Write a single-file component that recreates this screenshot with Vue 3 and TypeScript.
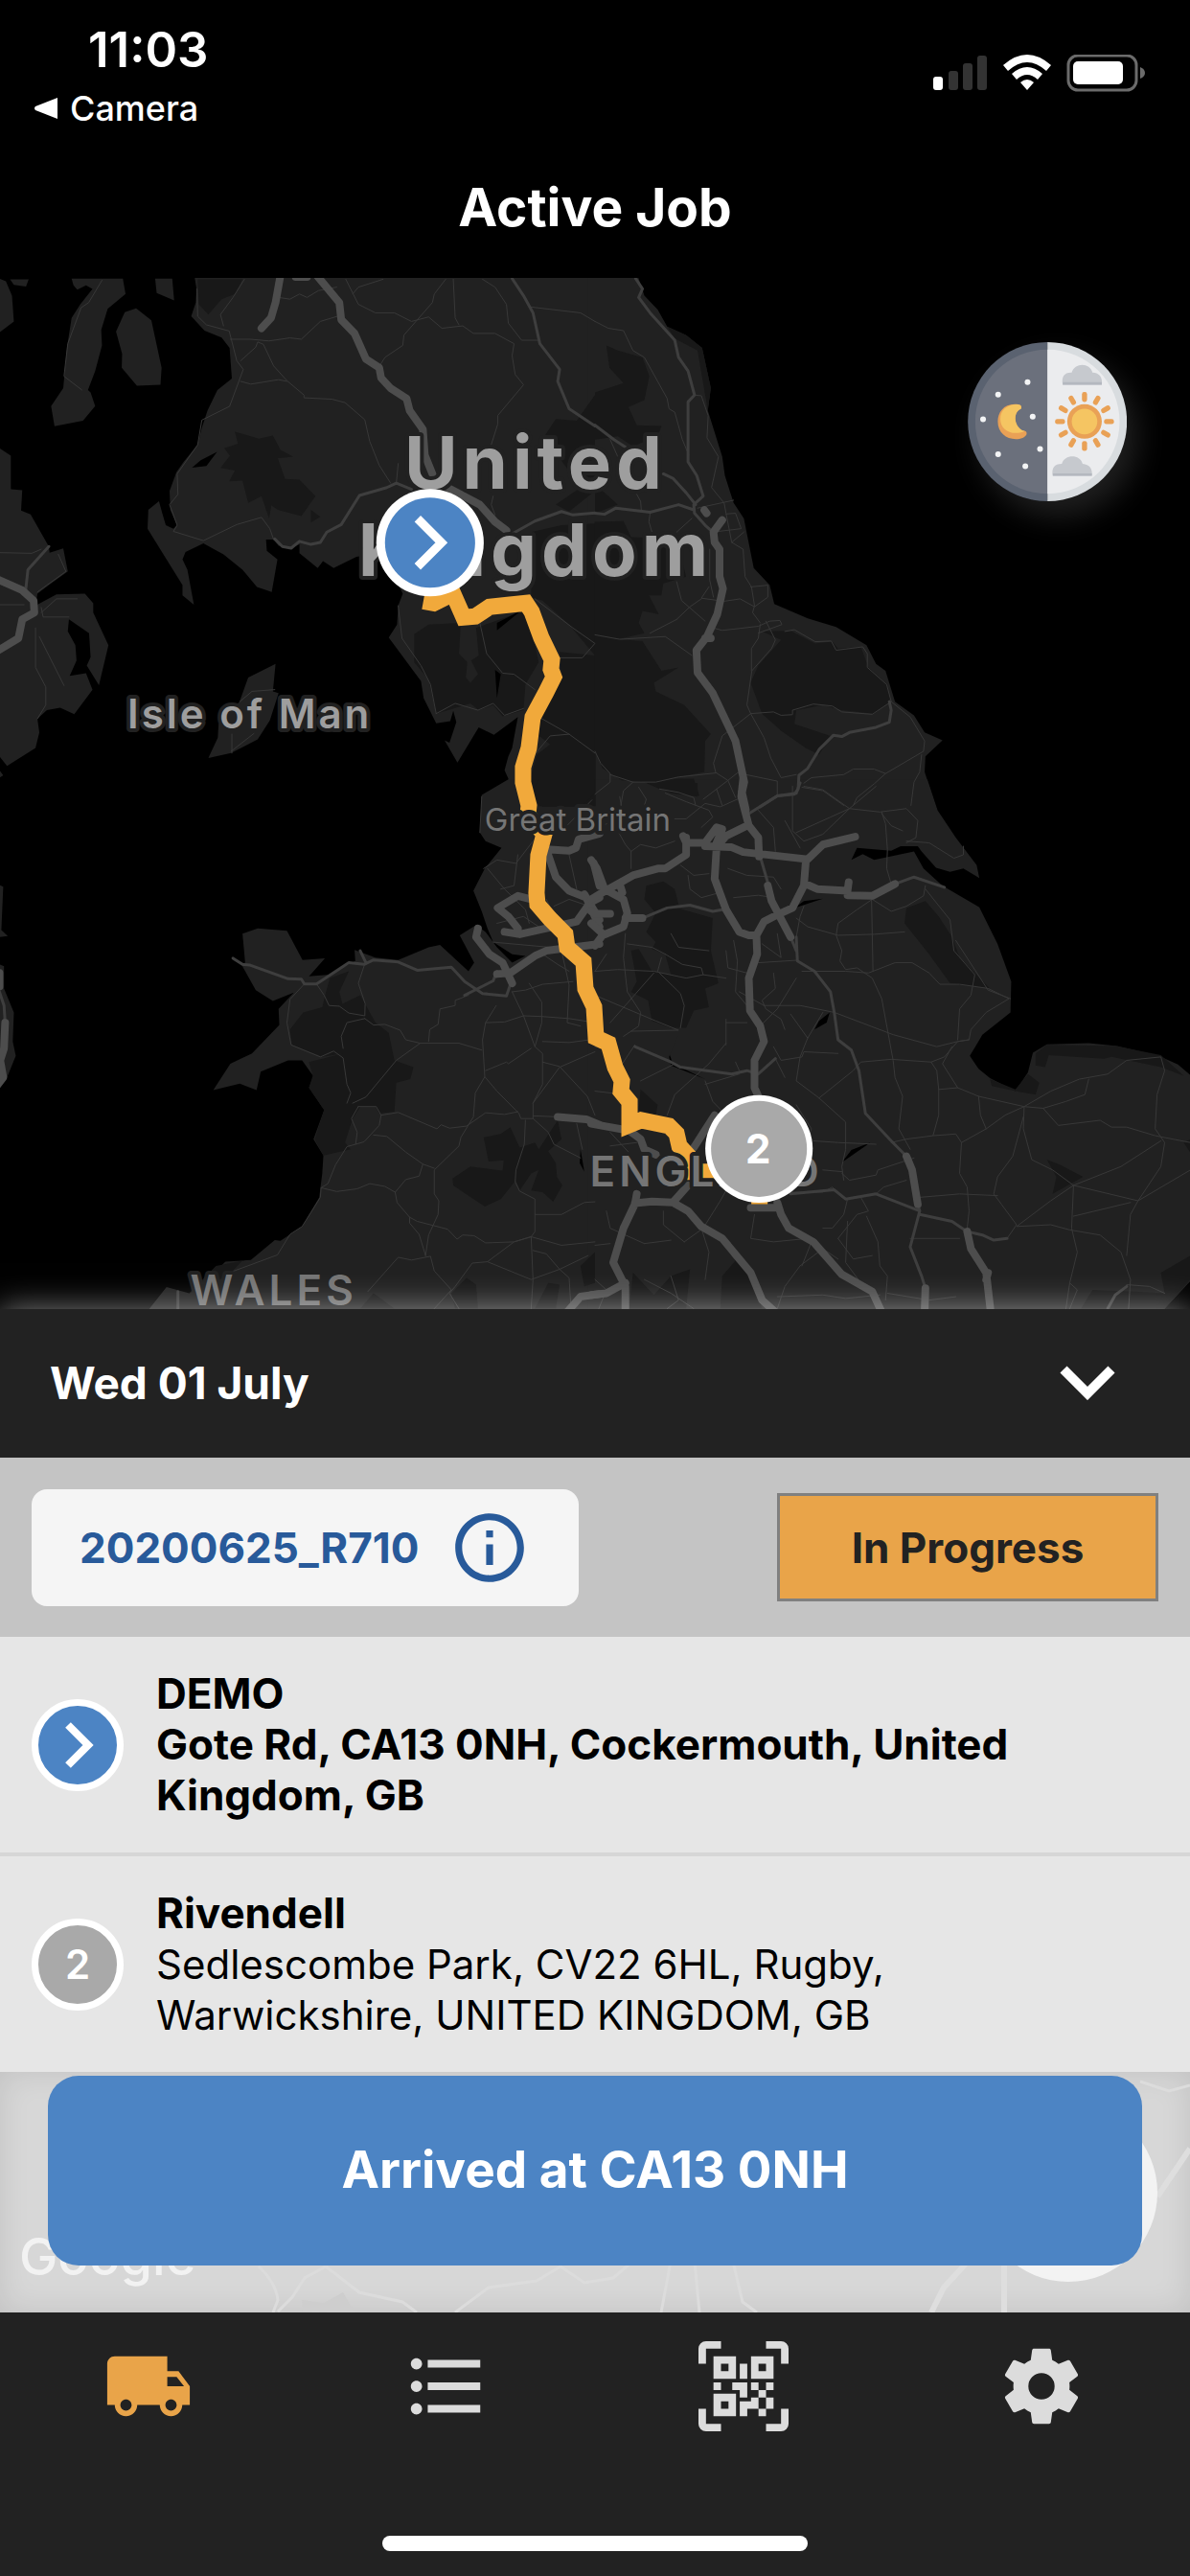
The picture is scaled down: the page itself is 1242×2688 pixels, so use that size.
<script setup lang="ts">
import { ref } from 'vue'

type Layer = 'land' | 'park' | 'water' | 'minor' | 'major' | 'motorway'

interface Tile extends Record<Layer, string> {
  id: string
  x: number
  y: number
}

interface MapLabel {
  text: string
  x: number
  y: number
  kind: string
}

interface Stop {
  name: string
  address: string
  current: boolean
  order: number
}

interface Tab {
  id: string
  label: string
  icon: string
}

// Painted bottom to top across all tiles, so that tile edges never show.
const layers: Layer[] = ['land', 'park', 'water', 'minor', 'major', 'motorway']

// Each tile covers 621 x 560 map pixels and is drawn on a 1568-unit grid.
const tiles: Tile[] = [
  {
    id: 'north-west',
    x: 0,
    y: 280,
    land:
      'M513 20L519 60 517 100 505 140 540 182 585 202 606 232 612 322 574 355 548 415 533 465 522 515 485 565 466 595 448 650 450 705 468 750 458 760 438 750 430 720 420 680 392 705 390 760 440 850 482 925 482 955 512 982 495 880 482 850 490 828 537 803 590 835 640 880 678 930 717 945 732 850 704 825 702 792 722 792 735 810 767 817 790 806 790 832 838 875 852 855 880 875 940 842 1010 830 1062 950 1050 985 1047 1040 1025 1078 1110 1205 1117 1255 1150 1328 1187 1322 1195 1292 1203 1325 1185 1385 1172 1378 1206 1443 1262 1340 1302 1362 1365 1310 1350 1400 1340 1425 1330 1465 1340 1490 1342 1515 1270 1540 1270 1580H1600V20Z' +
      'M0 30L17 38 33 80 38 155 0 187ZM28 32H77L70 53 38 48ZM190 30H325L332 75 285 118 268 180 270 225 252 300 233 355 240 362 252 402 220 445 145 461 136 402 168 350 178 230 190 145 213 105 245 60 228 50 205 62 195 50ZM330 128L360 117 400 152 427 290 424 340 362 343 322 290 323 250 307 185ZM410 30H455L460 94 414 72Z' +
      'M0 525L30 547V645L60 648 57 707 82 718 130 812 132 830 168 818 180 885 130 925 100 950 95 985 150 952 225 950 247 978V1005L287 1100 262 1217 230 1160 240 1135 236 1065 183 1025 180 1060 200 1100 203 1145 185 1190 228 1182 245 1230 197 1302 160 1283 125 1290 100 1315 105 1355 95 1400 20 1453 0 1425ZM0 1465L10 1480 0 1487ZM727 1155L720 1235 735 1240 712 1320 680 1375 610 1415 550 1430 575 1370 577 1330 632 1265 655 1195Z',
    park:
      'M620 477L683 497 720 488 740 530 773 550 733 555 752 615 790 617 832 665 795 723 733 705 716 692 710 730 690 665 655 685 640 620 605 622 620 590 582 583 607 547 592 525 628 512ZM820 705L845 725 820 742ZM522 32H640L620 75 585 90 550 135 525 105ZM1092 1068L1130 1040 1215 1035 1210 1125 1232 1150 1228 1195 1240 1210 1260 1185 1242 1145 1262 1130 1255 1050 1380 1000 1410 1100 1420 1150 1385 1215 1380 1290 1325 1308 1300 1275 1262 1290 1240 1270 1150 1300 1130 1200 1092 1150Z' +
      'M1400 770L1480 750 1570 745V1380L1510 1398 1450 1390 1415 1360 1410 1300 1480 1200 1475 1120 1568 1130 1500 1040 1430 970 1400 960ZM1465 440L1520 445 1568 370V650L1500 710 1465 690 1530 640 1460 530 1435 490ZM1415 1420L1450 1390 1510 1398 1570 1370V1570H1420L1395 1500Z',
    water: 'M507 582L530 560 573 536 545 577ZM1310 1035L1375 998 1310 1057ZM1305 1172L1320 1185 1310 1255Z',
    minor:
      'M270 35L235 100 215 115 180 220 170 315 217 355M520 60L522 140 545 165 605 183 625 270 642 295 606 403 533 443 522 515 468 600 470 660 448 690 468 750 458 768 537 795 625 748 690 727 712 760 722 792M735 85L765 90 790 75 810 85 840 65 888 55M645 32L615 85 582 135 590 168M608 207H660L710 212 765 203 795 207 845 155 890 140M635 270L675 230 680 215 695 222 722 285 757 328 802 370V378L875 382 910 392 962 442 975 505 1000 575 1030 627M635 330L662 338 735 325 757 330M912 32L945 105 990 130 1040 130 1085 155 1130 142 1165 175 1220 168 1248 190 1305 190 1355 220 1350 255 1358 310 1380 340 1312 430V455L1295 515M1175 32L1145 75 1140 100 1065 195 1062 225 1015 260 998 290M1195 32L1200 145 1210 165M1272 32L1305 55 1335 105 1340 160 1375 210H1423M1400 113L1530 130 1568 155M930 75L945 55 1010 32' +
      'M0 830L85 832 110 820M155 835L175 885 100 945M0 982H65M110 1005L150 965 205 965M110 990L115 1018H183M105 1075L170 1218M95 1050V1165L122 1222V1275L100 1315M1050 985L1060 1080 1110 1160 1135 1215 1150 1300M1265 1035L1283 1125 1325 1182 1355 1185 1410 1230M1410 965L1510 1050 1568 1095 1535 1137H1475M1150 1300L1200 1270 1260 1290 1300 1270 1330 1305 1380 1285M1405 1300L1500 1360 1568 1415M1300 665L1295 690 1305 720M633 1265L665 1235 725 1230M612 1415V1360M610 1410L670 1358M1405 1425L1450 1365 1500 1360M1050 570L1045 627',
    major:
      'M1350 30L1380 80 1405 130 1423 220 1475 295 1470 330 1500 410 1568 460M725 790L745 812 768 817 790 797 820 806 845 800 862 770 900 748 948 663 1020 640 1045 627 1085 645M1350 775L1410 738 1480 710 1510 720 1568 714M130 812L75 880 68 950',
    motorway:
      'M740 20L727 100 715 145 690 175M835 20L895 100 900 150 935 190 965 265 1000 290 1005 320 1030 350 1072 380 1080 415 1115 470 1120 545 1140 600M1180 640L1265 690 1305 740 1335 765M-10 905L60 940 90 970 92 1005 60 1025 50 1080 -10 1120M780 25H810',
  },
  {
    id: 'north-east',
    x: 621,
    y: 280,
    land:
      'M-20 20H112L130 80 165 120 190 170 240 195 282 232 305 350 297 415 335 550 342 605 365 685 392 730 418 875 460 925 472 980 560 1022 635 1047 715 1100 740 1155 765 1175 790 1265 840 1305 868 1355 915 1378 870 1425 868 1470 900 1580H-20Z',
    park:
      'M30 225L60 240 125 260 143 315 130 385 88 405 110 458 175 460 165 490 100 520 60 490 0 500V362L75 335 38 290ZM0 630L60 690 0 715ZM-1 740L75 738 95 785 215 790 240 900 180 920 175 955 142 955 168 1010 125 1000 115 1035 130 1065 60 1083 125 1088 175 1175 220 1165 155 1210 160 1235 235 1275 305 1360 290 1380 288 1470 200 1490 260 1490 275 1540 170 1520 130 1500 70 1495 20 1460 -1 1410ZM440 1060L515 1058 580 1095 625 1090 640 1110 700 1105 720 1165 770 1215 780 1265 735 1300 650 1290 600 1275 530 1290 525 1330 620 1365 590 1420 555 1400 490 1350 440 1300 410 1210 430 1160 490 1085ZM190 170L240 195 282 232 305 350 297 415 270 240 210 205Z',
    water: '',
    minor:
      'M0 155L35 175 75 182 100 240 130 260 190 380 195 410 210 420 230 500 247 545M262 370L280 372 298 430 295 495 325 550 307 640 340 685 345 715 360 800 390 820 395 900 412 930 420 985 415 1005 435 1035M270 700L365 677M345 717L370 715 385 760 325 768M360 800L392 770M410 930L455 925 455 960 420 988 382 965 340 972 280 963 300 930M302 820V910L312 960M215 915L228 970 290 1030M215 1025L250 988 280 965M145 1065L215 1025M0 1070L65 1083 185 1075 255 1130M312 1050L335 1057 430 1045 460 1030 487 1028 492 1040 430 1065M450 1030L475 1085 465 1110 413 1175 400 1275 410 1300 470 1295 490 1305 520 1303V1290L575 1272 625 1278 650 1295 730 1302 780 1265M435 1040L430 1080 412 1110V1175M500 1060L525 1055 580 1090 622 1088 635 1115 705 1105 717 1125V1165L768 1215 780 1265 830 1310 868 1380 865 1410 765 1475 735 1462H680L655 1478 570 1487 550 1503M410 1300L445 1370 463 1430 490 1487 530 1478M410 1300L335 1365 312 1445 318 1472 350 1495 375 1473 480 1497V1540M765 1475L735 1505 690 1545 680 1568M545 1515L600 1525 655 1568M350 1495L370 1545M350 1495L285 1550M320 1520L335 1568M0 1410L15 1445 40 1475V1500L0 1535M40 1478L100 1500 160 1500 220 1485 320 1473M100 1500L75 1525 68 1568M115 1515L135 1550 130 1568M170 1520L220 1530 260 1545 265 1568M110 660L120 680 122 705M145 715L142 740 150 770M40 500L60 550M860 1420L855 1470 840 1500 832 1568M215 770L255 730',
    major:
      'M107 30L125 60 115 85 145 130 210 210 220 260 245 300 262 370 245 390V565L268 605 285 665 260 690 262 715 290 750 305 765M180 600L205 613 240 655 265 690M0 715L25 718 55 700 145 712 220 690 260 705M0 458L50 500 80 522M775 1265L780 1290 775 1325 740 1340 670 1355 650 1367 628 1363 590 1405 560 1460 537 1480 535 1520 525 1535 480 1540 435 1572',
    motorway:
      'M335 735L312 770 315 800 328 820V900L337 935 322 1010 295 1075 267 1115 270 1180 310 1240 370 1380 393 1500 387 1530 397 1580M288 706L294 715M290 1080H305',
  },
  {
    id: 'south-west',
    x: 0,
    y: 820,
    land:
      'M1340 -20L1270 25 1265 135 1280 160 1322 180 1278 240 1248 305 1270 365 1285 415 1300 455 1350 490 1385 495 1350 515 1310 470 1280 425 1255 405 1212 435 1250 515 1235 540 1160 463 1130 470 1050 507 990 500 935 478 937 510 870 550 815 555 857 502 798 507 757 422 680 415 640 430 647 515 637 520 675 595 720 627 775 602 735 650 737 697 665 780 608 810 563 887 633 868 677 887 688 833 760 800H797L827 847 815 880 855 945 827 1030 853 1078 850 1130 842 1200 797 1285 740 1327 725 1325 662 1383 595 1388 570 1415 500 1480 440 1462 395 1525V1580H1600V-20ZM0 288L10 293 5 420 22 437 0 440ZM0 520L12 525V590L38 660 35 745 43 787 20 850 0 875Z',
    park:
      'M870 560L920 540 895 600 903 635 950 610 990 690 1025 720 1040 800 1090 820 1082 855 1045 865 1040 950 1000 955 990 935H950L930 970 910 1040 925 1060 853 1078 830 1030 855 945 815 880 825 845 815 805 905 780 850 790 770 755 765 710 800 660 850 645 860 600ZM1275 1025L1320 1015 1345 995 1370 1055 1410 1040 1420 1060 1470 975 1480 1030 1445 1065 1465 1100 1468 1140 1482 1165 1458 1213 1430 1185 1400 1180 1420 1120 1400 1130 1370 1180 1360 1150 1320 1205 1278 1227 1195 1165 1193 1145 1240 1110 1325 1122 1328 1092 1288 1095ZM1190 1480L1230 1435 1255 1455 1260 1525H1200ZM950 1525L985 1480 1040 1525ZM1410 1525L1445 1450 1475 1455 1465 1525ZM1530 1400L1568 1360V1450L1540 1460ZM1400 20L1420 -20H1568V20L1530 60H1430ZM500 1480L570 1400 640 1385 600 1430Z',
    water: 'M1530 1060L1540 1125 1528 1100Z',
    minor:
      'M803 577L765 622 757 690 768 755 845 790 880 773 905 793 915 870 925 895 915 925M835 577L855 610 868 640 895 642 920 662 962 670 963 635 945 575 963 515M962 678L915 690 900 730 905 765M962 678L985 697 1015 695 1055 712 1070 740 1108 750H1210L1270 770M1108 750L1045 800 965 907 930 925M945 935H992L1005 960 1000 990 960 1038 938 1045 942 1010 927 970 945 935M1005 960L1050 952 1152 1000 1163 988 1185 998 1230 992 1280 953 1330 958 1365 950M985 1018L1020 1022 1070 1068 1115 1103 1105 1138 1070 1148 1042 1185 1015 1168 975 1160 942 1175 888 1183 847 1172M938 1045L915 1052 885 1105 865 1160 847 1172 845 1200 797 1285 765 1308 732 1368 610 1418M1042 1185L1047 1215 1080 1258V1275L1105 1308 1122 1370M1080 1258L1100 1270 1180 1293 1205 1322 1220 1310 1250 1312 1280 1333 1355 1330 1400 1315 1480 1340 1568 1330M1122 1370L1130 1310 1155 1250 1157 1210 1145 1190 1145 1120 1210 1050 1215 1025 1248 965 1253 895 1278 848 1272 740 1280 690 1308 640M1115 1103L1145 1115M1300 455L1450 470M1130 745L1133 710 1155 695 1160 650 1200 640V625L1235 610M1278 848L1310 890 1368 955 1373 970H1405V925L1430 870V780L1410 760 1380 670 1350 600M1410 760L1428 690V630L1395 575M1280 830L1335 805 1340 810 1400 765M1430 745L1500 748 1568 738M1405 925L1475 820 1568 775M1430 805L1475 818 1548 905 1568 960M1405 970L1445 1010 1460 1045 1530 1085M1385 975L1382 1045 1360 1120 1358 1155 1370 1182 1410 1205V1300L1400 1315 1405 1440 1400 1525M1410 1250H1480L1540 1215 1568 1213M1405 1355L1440 1365 1475 1410 1500 1435 1505 1525M1400 1315L1355 1330 1285 1388 1245 1392 1200 1460 1185 1480 1210 1525M1285 1388L1400 1440 1475 1410 1550 1370M970 1475L1050 1375 1085 1383 1135 1372 1145 1415 1190 1470 1145 1525M1405 962L1470 965M1280 690L1330 688 1380 670 1428 672 1500 678 1568 690M1350 600L1385 595 1430 578 1510 570M1275 240L1310 215 1360 225 1405 160M1365 200L1355 290 1320 300M1285 240L1330 300 1385 360 1395 400M1270 30L1265 135M1500 200L1520 300M1440 330L1480 420M1310 400L1380 380 1420 410M1460 350L1500 330 1540 345M1430 490L1470 520 1500 540M1480 480L1500 580 1495 690 1530 700M1450 130L1490 120 1560 40M1520 985L1535 1060',
    major:
      'M615 502L640 520 660 522 760 562 795 563 803 577H835L920 515 960 520 985 507 1050 513 1100 537 1190 528 1225 570 1272 605 1335 612 1348 570M1225 610L1300 568 1310 540M950 480L965 515M0 600L12 640 15 690M470 1475V1525',
    motorway:
      'M1260 415L1255 440 1290 490 1325 515 1350 575M1310 548L1345 545 1410 495 1440 480 1580 460M1330 425L1370 432 1520 395 1555 340 1580 325M1365 415L1340 380 1312 355 1365 320 1400 330M1450 185L1500 188 1518 180 1525 155 1580 138M1445 200L1465 265 1500 305 1545 325 1580 410M1540 315L1580 390M1565 225L1580 290M1470 965L1545 972 1580 988M1475 1560L1530 1490 1580 1482M0 545V585M15 690L12 765 2 800 10 850 -5 872',
  },
  {
    id: 'south-east',
    x: 621,
    y: 820,
    land:
      'M-20 -20H875L902 70 950 150 1005 230 1012 268 970 240 935 250 898 238 860 190 850 175H805L780 188 690 180 675 215 705 198 735 215 840 190 865 240 915 290 1012 353 1060 460 1096 570 1094 660 1020 725 987 787 1010 825 1040 852 1107 890 1140 835 1153 778 1190 753 1300 750 1375 758 1480 785 1535 812 1580 855V1430L1500 1525V1580H-20Z',
    park:
      'M820 355L870 335 905 380 940 440 960 500 1040 590 935 575 880 490 815 400ZM1160 780L1190 755 1370 758 1490 785 1550 845 1490 820 1360 790 1340 795 1195 785 1185 820 1160 815ZM135 290L180 278 210 300 220 345 200 350 310 385 305 480 325 575 290 590 300 645 260 655 240 705 200 705 150 685 140 625 95 600 110 570 95 480 115 475 150 540 200 550 185 490 150 475 160 455 135 425 160 370 130 330ZM1190 1090L1225 1105 1285 1140 1205 1190 1215 1140ZM1140 840L1170 865 1160 900 1107 890 1045 875 1040 855 1107 885ZM120 885L165 930 160 960 115 945ZM100 1420L155 1485 200 1430 250 1410 240 1525H90ZM330 1525L335 1430 370 1385 420 1450 440 1525ZM1490 1420L1568 1370V1440L1500 1525H1280L1310 1470 1420 1475 1500 1480ZM1550 1040L1568 1030V1070ZM140 -10H270V30L200 20Z',
    water: 'M525 355L550 335 600 328ZM578 710L590 685 618 660 610 690ZM650 1098L675 1062 725 1040ZM222 720L195 790 200 815 290 855 205 810 197 785Z',
    minor:
      'M0 120L60 100 70 60 65 30M35 80L80 170 95 190 120 170 160 180 210 160M95 190V240M185 20L240 45 300 70 310 90 280 120M210 95H240L290 50 330 60 380 35M430 70L470 120 475 190M520 0V130L550 160 600 140 670 65 740 0M550 0L600 10 670 65 750 75 820 65 850 100 845 150 820 165M755 80L780 115 810 130M755 75L765 110 770 185 768 240 780 285M820 160L880 165 945 210 970 200V175M670 65L620 90 530 135M500 100L540 180M245 260L250 300 280 325 330 310M225 230L260 260 300 255M350 240L400 260 470 265 490 300M365 325L430 318 470 325M870 290L865 320 820 350 780 365 730 330M728 320L732 540M530 385L560 410 640 435 735 432 815 425M730 330L690 360 640 400 635 435 650 480 645 510 660 535 690 530 730 560 755 620 785 800 790 850 810 905 800 1000 830 1060M870 300L935 390 945 480 1000 550 990 610 960 650 955 740M430 515L530 508M545 540L660 540 720 545 790 515 835 515 880 545 908 578 960 578 1035 590 1090 620 1030 660 990 710 985 740 955 745 900 760 785 725 630 660 540 640 445 640M950 450L1035 595 1094 620M480 430L490 500 440 460M365 450L375 510 370 600 400 640M345 480L350 530 400 545M470 545L475 590 440 625 450 650 490 680 500 710M515 665L560 735M600 660L560 735 540 790 530 860 590 910 660 980 660 1060 650 1110 655 1150M530 440L540 380 550 350M435 700L480 650 530 560M445 640L380 600M345 690L400 690M345 680V755M95 715L220 712 160 685 0 610M0 540L60 535 155 540 240 560 285 550 345 560M80 430L75 500 85 600 120 660 115 700 75 730M175 500L165 540 225 605 235 640 225 705M30 490L0 540M185 490L230 520 280 530 285 550M200 430L220 470 300 480M85 460L150 470 185 490M155 545L40 690M105 755L60 830M210 810L120 860M290 860L310 920 345 960M345 750L300 810 210 900 190 960M380 840L290 870M370 805L380 830M470 760L490 800 545 790 550 775 640 780M475 795L500 850M590 910L680 830 700 805 780 797 885 805 920 790 955 745 985 740M940 760L915 810 955 880 1010 905 1070 920 1130 935 1128 1000 1150 1090 1205 1120 1260 1165 1255 1290 1270 1360 1250 1450 1240 1525M955 880L905 885 905 960 890 1020 820 1030 780 1040M885 805L900 830 905 885M1010 905L1015 960 1030 1000M1130 935L1080 960 1030 1000 965 1040 960 1130 980 1170 985 1240 980 1290M890 1020L950 1015 965 1040M1130 935L1200 890 1275 855 1350 840 1400 800 1490 790 1500 830 1480 900 1475 1000 1500 1040 1490 1110 1430 1210M1130 935L1180 940 1220 990 1330 975 1360 995 1400 995 1475 1020 1568 1040M1128 965L1100 1080 1060 1140 1050 1190 1070 1220 1110 1280 1085 1320M1260 1165L1385 1110 1490 1035M1260 1165L1200 1210 1110 1285 1200 1280 1250 1295 1330 1310 1385 1360 1410 1440 1405 1525M1260 1165L1430 1210 1410 1250 1400 1370M1260 1255L1410 1215M1430 1210L1568 1120M1300 855L1290 900 1240 920 1180 940M515 1185L600 1185 625 1170 650 1200 665 1205 655 1250 625 1290 600 1290M700 1200L720 1240 690 1250 640 1320M575 1035L640 1040 740 1045M530 930L570 1000 560 1030 540 1080M650 1130L670 1150 740 1135 745 1120 840 1085M600 1120L650 1125M740 1190L760 1170 820 1150M665 1270L660 1390 700 1450M540 1400L600 1350 640 1380M420 1250L410 1320 470 1330 560 1320M570 1330L545 1400M715 1255L745 1330 750 1400 770 1430 765 1500M640 1320L680 1380 730 1370M830 1320H960M855 1200L960 1190 1060 1195M235 1330L285 1290 330 1210 345 1180M280 1290L300 1360 290 1440M180 1240V1280L235 1330M130 1335L200 1325M30 1240L40 1290 130 1335M0 1340L40 1335M0 890L80 900M0 760L60 770M40 1050L110 1040M40 1010L90 1070M150 1060L180 1085 240 1100M130 1440L200 1480 260 1525M200 1430L220 1500 190 1525M480 1490L600 1485 660 1495 750 1485M770 1480L880 1500 950 1490M1250 1450L1270 1470 1250 1525M1400 1455L1460 1460 1500 1480M0 1440L30 1470 10 1525M480 1525L500 1460 540 1400',
    major:
      'M435 205L460 300M125 385L190 355 250 347 310 365 335 360M530 440L533 510 578 540 620 600 630 660 640 740 675 770 695 830 712 955 780 1035 820 1080M850 1220L855 1240 830 1345 860 1430 870 1465M855 1250L940 1270 980 1300 1020 1310 1050 1325 1085 1320M515 1190L630 1178 660 1205 740 1190 855 1240M105 760L200 805 225 820 360 840 400 830 430 840 475 795M790 285L840 265 920 295M405 80L480 28 530 20 540 -10M1350 1525L1370 1485 1400 1460M515 440L530 480',
    motorway:
      'M390 -20L385 30 405 115 430 150 432 205M232 145L240 165 290 165 320 120 335 125 320 165M290 175L360 178 390 192 560 213 600 170 685 147M400 115L345 145 330 165M555 220L550 290 520 355 480 375 445 395 425 435M555 285L585 300 665 305 668 280M665 318L730 320 790 285M455 290L465 335 515 440M320 180L315 270 345 360 380 425 405 435H425L427 490 405 560 408 655 435 700 445 745 420 800V880L430 905M-10 330L20 310 100 260 165 240H185L240 200V150M-10 215L5 240 25 300 75 330 85 370 75 410 20 435 0 465M65 285L72 310M-10 365L0 372H40M80 385H125M-10 400L20 430M-10 985L90 1005 120 1030 130 1060 160 1075M260 1055L315 960M205 1215L245 1165M110 1190L105 1220 75 1290 48 1390 80 1460V1535M105 1217L150 1212 205 1215 245 1240 280 1285 335 1320 410 1420 440 1500 475 1535M80 1450L30 1480 -10 1485M410 1230H480M480 1215L490 1250 510 1290 575 1330 650 1425 730 1475 755 1535M820 1080L835 1120 850 1220M980 1300L990 1350 1030 1420 1042 1535M870 1465L868 1535M1035 1420L1030 1440',
  },
]

const labels: MapLabel[] = [
  { text: 'United', x: 559, y: 510, kind: 'country' },
  { text: 'Kingdom', x: 559, y: 601, kind: 'country' },
  { text: 'Isle of Man', x: 261, y: 760, kind: 'island' },
  { text: 'Great Britain', x: 603, y: 866, kind: 'landmass' },
  { text: 'ENGLAND', x: 737, y: 1237, kind: 'nation' },
  { text: 'WALES', x: 286, y: 1361, kind: 'nation' },
]

const route =
  'M442 627L453 629 473 619 484 644 496 643 511 633 530 631 549 629 555 638 565 665 576 688 575 698 578 706 570 722 556 748 552 780 546 800 546 816 552 840 551 850 568 870 562 892 560 931 561 943 574 958 590 974 592 988 609 1003 611 1031 620 1050 622 1082 635 1088 642 1113 649 1127 648 1138 657 1149 657 1173 669 1168 698 1174 706 1182 709 1195 719 1206 719 1222 755 1222 M784 1247H801'

const stops = ref<Stop[]>([
  { name: 'DEMO', address: 'Gote Rd, CA13 0NH, Cockermouth, United Kingdom, GB', current: true, order: 1 },
  { name: 'Rivendell', address: 'Sedlescombe Park, CV22 6HL, Rugby, Warwickshire, UNITED KINGDOM, GB', current: false, order: 2 },
])

const activeTab = ref('jobs')

const tabs: Tab[] = [
  {
    id: 'jobs',
    label: 'Jobs',
    icon: 'M20 8h-3V4H3c-1.1 0-2 .9-2 2v11h2c0 1.66 1.34 3 3 3s3-1.34 3-3h6c0 1.66 1.34 3 3 3s3-1.34 3-3h2v-5l-3-4zM6 18.5c-.83 0-1.5-.67-1.5-1.5s.67-1.5 1.5-1.5 1.5.67 1.5 1.5-.67 1.5-1.5 1.5zm13.5-9l1.96 2.5H17V9.500h2.500zm-1.500 9c-.83 0-1.500-.67-1.500-1.500s.67-1.500 1.500-1.500 1.500.67 1.500 1.500-.67 1.500-1.500 1.500z',
  },
  {
    id: 'list',
    label: 'List',
    icon: 'M4 10.5c-.83 0-1.5.67-1.5 1.5s.67 1.5 1.5 1.5 1.5-.67 1.5-1.5-.67-1.5-1.5-1.5zm0-6c-.83 0-1.5.67-1.5 1.5S3.170 7.500 4 7.500 5.500 6.830 5.500 6 4.830 4.500 4 4.500zm0 12c-.83 0-1.5.67-1.5 1.5s.67 1.5 1.5 1.5 1.5-.67 1.5-1.5-.67-1.5-1.5-1.5zM7 19h14v-2H7v2zm0-6h14v-2H7v2zm0-8v2h14V5H7z',
  },
  {
    id: 'scan',
    label: 'Scan',
    icon: 'M4,4H10V10H4V4M20,4V10H14V4H20M14,15H16V13H14V11H16V13H18V11H20V13H18V15H20V18H18V20H16V18H13V20H11V16H14V15M16,15V18H18V15H16M4,20V14H10V20H4M6,6V8H8V6H6M16,6V8H18V6H16M6,16V18H8V16H6M4,11H6V13H4V11M9,11H13V15H11V13H9V11M11,6H13V10H11V6M2,2V6H0V2A2,2 0 0,1 2,0H6V2H2M22,0A2,2 0 0,1 24,2V6H22V2H18V0H22M2,18V22H6V24H2A2,2 0 0,1 0,22V18H2M22,22V18H24V22A2,2 0 0,1 22,24H18V22H22Z',
  },
  {
    id: 'settings',
    label: 'Settings',
    icon: 'M12,15.5A3.5,3.5 0 0,1 8.5,12A3.5,3.5 0 0,1 12,8.5A3.5,3.5 0 0,1 15.5,12A3.5,3.5 0 0,1 12,15.5M19.43,12.97C19.47,12.65 19.5,12.33 19.5,12C19.5,11.67 19.47,11.34 19.43,11L21.54,9.37C21.73,9.22 21.78,8.95 21.66,8.73L19.66,5.27C19.54,5.05 19.27,4.96 19.05,5.05L16.56,6.05C16.04,5.66 15.5,5.32 14.87,5.07L14.5,2.42C14.46,2.18 14.25,2 14,2H10C9.75,2 9.54,2.18 9.5,2.42L9.13,5.07C8.5,5.32 7.96,5.66 7.44,6.05L4.95,5.05C4.73,4.96 4.46,5.05 4.34,5.27L2.34,8.73C2.21,8.95 2.27,9.22 2.46,9.37L4.57,11C4.53,11.34 4.5,11.67 4.5,12C4.5,12.33 4.53,12.65 4.57,12.97L2.46,14.63C2.27,14.78 2.21,15.05 2.34,15.27L4.34,18.73C4.46,18.95 4.73,19.03 4.95,18.95L7.44,17.94C7.96,18.34 8.5,18.68 9.13,18.93L9.5,21.58C9.54,21.82 9.75,22 10,22H14C14.25,22 14.46,21.82 14.5,21.58L14.87,18.93C15.5,18.67 16.04,18.34 16.56,17.94L19.05,18.95C19.27,19.03 19.54,18.95 19.66,18.73L21.66,15.27C21.78,15.05 21.73,14.78 21.54,14.63L19.43,12.97Z',
  },
]

const rays = Array.from({ length: 12 }, (_, i) => i * 30)

const stars = [
  [277, 207],
  [185, 246],
  [138, 323],
  [293, 315],
  [316, 416],
  [185, 432],
  [270, 470],
]
</script>

<template>
  <div class="app">
    <header class="top">
      <div class="status">
        <div class="status-left">
          <time class="clock">11:03</time>
          <a class="back" href="#">
            <svg viewBox="0 0 24 24" aria-hidden="true"><path d="M24 1V23L1 14Q-1 12 1 10Z" fill="#fff" /></svg>
            <span>Camera</span>
          </a>
        </div>
        <svg class="indicators" viewBox="0 0 222 40" aria-hidden="true">
          <rect x="0" y="23" width="10" height="14" rx="3" fill="#fff" />
          <g fill="#333">
            <rect x="16" y="17" width="10" height="20" rx="3" />
            <rect x="31" y="9" width="10" height="28" rx="3" />
            <rect x="46" y="1" width="10" height="36" rx="3" />
          </g>
          <g fill="#fff">
            <path d="M73 11Q98 -11 123 11L118 17Q98 -1 78 17Z" />
            <path d="M82 20Q98 6 114 20L109 26Q98 16 87 26Z" />
            <path d="M91 29Q98 23 105 29L98 37Z" />
          </g>
          <rect x="141" y="1" width="71" height="36" rx="10" fill="none" stroke="#6b6b6b" stroke-width="3" />
          <rect x="146" y="7" width="52" height="24" rx="5" fill="#fff" />
          <path d="M216 13Q221 15 221 19T216 25Z" fill="#6b6b6b" />
        </svg>
      </div>
      <h1>Active Job</h1>
    </header>

    <section class="map" aria-label="Route map">
      <svg class="map-canvas" viewBox="0 290 1242 1075" preserveAspectRatio="xMidYMin slice">
        <g v-for="layer in layers" :key="layer" :class="layer">
          <path v-for="t in tiles" :key="t.id" :d="t[layer]" :transform="`translate(${t.x} ${t.y}) scale(0.396 0.3571)`" />
        </g>
        <path class="route" :d="route" />
        <text v-for="l in labels" :key="l.text" :x="l.x" :y="l.y" :class="['label', l.kind]">{{ l.text }}</text>
        <g>
          <circle cx="449" cy="566" r="56" fill="#fff" />
          <circle cx="449" cy="566" r="47" fill="#4c84c4" />
          <path d="M436 541L461 566L436 591" fill="none" stroke="#fff" stroke-width="9" />
        </g>
        <g>
          <circle cx="792" cy="1198" r="56" fill="#fff" />
          <circle cx="792" cy="1198" r="50" fill="#a9a9a9" />
          <text class="pin-number" x="791" y="1213">2</text>
        </g>
      </svg>

      <button class="daynight" type="button" aria-label="Switch day and night map">
        <svg viewBox="90 82 497 497" aria-hidden="true">
          <path d="M339 82A248 248 0 0 0 339 579Z" fill="#5a6270" />
          <path d="M339 82A248 248 0 0 1 339 579Z" fill="#d8dcdf" />
          <path d="M339 105A225 225 0 0 0 339 556Z" fill="#6b707c" />
          <path d="M339 105A225 225 0 0 1 339 556Z" fill="#ebecee" />
          <circle v-for="s in stars" :key="s.join()" :cx="s[0]" :cy="s[1]" r="9" fill="#f3f4f5" />
          <path d="M250 277C205 270 184 300 184 330C184 365 210 385 240 385C256 385 270 379 274 370C276 360 268 358 262 359C235 350 230 300 256 291C260 284 256 278 250 277Z" fill="#e9a156" />
          <path d="M250 277C212 274 192 296 192 322C192 348 212 366 240 366C252 366 262 364 268 360C236 352 228 302 256 291C260 284 256 278 250 277Z" fill="#f5c562" />
          <g fill="#c6c9ce">
            <path d="M387 215C382 190 392 176 415 177C424 145 472 145 480 177C502 178 512 192 509 215Z" />
            <path d="M356 500C351 475 361 462 384 462C393 431 441 431 449 462C471 464 481 478 478 500Z" />
          </g>
          <g fill="#b4b8bf">
            <path d="M387 207H509V215H387Z" />
            <path d="M356 492H478V500H356Z" />
          </g>
          <rect v-for="r in rays" :key="r" x="447" y="238" width="16" height="31" rx="7" fill="#e9a156" :transform="`rotate(${r} 455 330)`" />
          <circle cx="455" cy="330" r="54" fill="#e9a156" />
          <circle cx="455" cy="330" r="40" fill="#f5c562" />
        </svg>
      </button>
    </section>

    <section class="sheet">
      <button class="date" type="button">
        <span>Wed 01 July</span>
        <svg viewBox="0 0 58 36" aria-hidden="true"><path d="M4 4L29 29L54 4" fill="none" stroke="#fff" stroke-width="10" /></svg>
      </button>

      <div class="job">
        <button class="job-ref" type="button">
          <span>20200625_R710</span>
          <svg viewBox="0 0 24 24" aria-hidden="true"><path d="M11 17h2v-6h-2v6zm1-15C6.480 2 2 6.480 2 12s4.480 10 10 10 10-4.480 10-10S17.520 2 12 2zm0 18c-4.410 0-8-3.590-8-8s3.590-8 8-8 8 3.590 8 8-3.590 8-8 8zM11 9h2V7h-2v2z" /></svg>
        </button>
        <button class="job-state" type="button">In Progress</button>
      </div>

      <ol class="stops">
        <li v-for="s in stops" :key="s.order" :class="{ current: s.current }">
          <span class="badge">
            <svg v-if="s.current" viewBox="0 0 80 80" aria-hidden="true"><path d="M30 19L51 40L30 61" fill="none" stroke="#fff" stroke-width="8" /></svg>
            <template v-else>{{ s.order }}</template>
          </span>
          <div class="stop-text">
            <strong>{{ s.name }}</strong>
            <span>{{ s.address }}</span>
          </div>
        </li>
      </ol>

      <div class="action">
        <svg class="faint" viewBox="0 0 1242 251" preserveAspectRatio="none" aria-hidden="true">
          <path d="M316 250L315 238L338 241L358 230L370 251Z" fill="#cecece" />
          <path d="M270 203Q288 220 290 238L285 251M340 203L318 215 305 235 290 250M340 203L375 230 420 240 435 251M475 251L510 225 560 218 585 203 610 220 640 215 660 198M700 198L690 251M725 198L730 251M765 198L775 240 790 251M1190 10L1220 20 1242 14" fill="none" stroke="#dcdcdc" stroke-width="3" />
          <path d="M1010 198L985 225 972 251M1048 198V251M1208 130L1242 80" fill="none" stroke="#dedede" stroke-width="6" />
        </svg>
        <span class="attribution">Google</span>
        <span class="fab"></span>
        <button class="arrived" type="button">Arrived at CA13 0NH</button>
      </div>
    </section>

    <nav class="tabs">
      <div class="tab-row">
        <button v-for="t in tabs" :key="t.id" type="button" :aria-label="t.label" :class="{ active: t.id === activeTab }" @click="activeTab = t.id">
          <svg viewBox="0 0 24 24" aria-hidden="true"><path fill-rule="evenodd" :d="t.icon" /></svg>
        </button>
      </div>
      <div class="home"></div>
    </nav>
  </div>
</template>

<style>
body {
  background: #000;
}
</style>

<style scoped>
.app {
  display: flex;
  flex-direction: column;
  min-height: 100vh;
  background: #000;
  color: #000;
  font-family: Inter, 'Liberation Sans', sans-serif;
}

button {
  margin: 0;
  border: 0;
  background: none;
  color: inherit;
  font: inherit;
  cursor: pointer;
}

svg {
  display: block;
}

.top {
  box-sizing: border-box;
  height: 290px;
  color: #fff;
}

.status {
  display: flex;
  justify-content: space-between;
  padding: 22px 46px 0 36px;
}

.clock {
  display: block;
  padding-left: 56px;
  font-size: 51px;
  font-weight: 600;
  line-height: 60px;
}

.back {
  display: flex;
  align-items: center;
  gap: 13px;
  margin-top: 9px;
  color: #fff;
  font-size: 36px;
  font-weight: 500;
  line-height: 44px;
  text-decoration: none;
}

.back svg {
  width: 24px;
  height: 24px;
}

.indicators {
  width: 222px;
  height: 40px;
  margin-top: 35px;
}

h1 {
  margin: 48px 0 0;
  font-size: 55px;
  font-weight: 700;
  line-height: 66px;
  text-align: center;
}

.map {
  position: relative;
  flex: 1 1 0;
  min-height: 600px;
  overflow: hidden;
}

.map-canvas {
  position: absolute;
  inset: 0;
  width: 100%;
  height: 100%;
}

.land {
  fill: #212121;
}

.park {
  fill: #181818;
}

.water {
  fill: #000;
}

.minor,
.major,
.motorway {
  fill: none;
  stroke-linecap: round;
  stroke-linejoin: round;
}

.minor path,
.major path,
.motorway path {
  vector-effect: non-scaling-stroke;
}

.minor {
  stroke: #383838;
  stroke-width: 1px;
}

.major {
  stroke: #3e3e3e;
  stroke-width: 3px;
}

.motorway {
  stroke: #4d4d4d;
  stroke-width: 8px;
}

.route {
  fill: none;
  stroke: #f1a93b;
  stroke-width: 17px;
  stroke-linejoin: miter;
}

.label {
  text-anchor: middle;
  fill: #757575;
  stroke: #212121;
  stroke-width: 8px;
  stroke-linejoin: round;
  paint-order: stroke;
}

.country {
  fill: #9e9e9e;
  font-size: 76px;
  font-weight: 700;
  letter-spacing: 5px;
}

.island {
  fill: #9e9e9e;
  font-size: 42px;
  font-weight: 600;
  letter-spacing: 3px;
}

.landmass {
  font-size: 33px;
}

.nation {
  font-size: 44px;
  font-weight: 600;
  letter-spacing: 4px;
}

.pin-number {
  fill: #fff;
  font-size: 42px;
  font-weight: 700;
  text-anchor: middle;
}

.daynight {
  position: absolute;
  top: 67px;
  right: 66px;
  padding: 0;
  border-radius: 50%;
  box-shadow: 12px 16px 30px rgba(255, 255, 255, 0.12);
}

.daynight svg {
  width: 166px;
  height: 166px;
}

.sheet {
  position: relative;
  box-shadow: 0 0 32px rgba(255, 255, 255, 0.5);
}

.date {
  display: flex;
  align-items: center;
  justify-content: space-between;
  width: 100%;
  height: 155px;
  padding: 0 78px 2px 52px;
  background: #222;
  color: #fff;
  font-size: 46px;
  font-weight: 700;
}

.date svg {
  width: 58px;
  height: 36px;
}

.job {
  display: flex;
  align-items: center;
  justify-content: space-between;
  height: 187px;
  padding: 0 33px;
  background: #c4c4c4;
}

.job-ref {
  display: flex;
  align-items: center;
  justify-content: space-between;
  width: 571px;
  height: 122px;
  padding: 0 50px;
  border-radius: 16px;
  background: #f5f5f5;
  color: #285a9a;
  font-size: 44px;
  font-weight: 700;
}

.job-ref svg {
  width: 86px;
  height: 86px;
  fill: #285a9a;
}

.job-state {
  width: 398px;
  height: 113px;
  border: 3px solid #808080;
  background: #e9a449;
  color: #222;
  font-size: 44px;
  font-weight: 700;
}

.stops {
  display: flex;
  flex-direction: column;
  gap: 4px;
  margin: 0;
  padding: 0;
  background: #d6d6d6;
  list-style: none;
}

.stops li {
  display: flex;
  align-items: center;
  gap: 34px;
  min-height: 225px;
  padding: 0 160px 0 33px;
  background: #e6e6e6;
}

.badge {
  display: flex;
  flex: none;
  align-items: center;
  justify-content: center;
  width: 82px;
  height: 82px;
  border: 7px solid #fff;
  border-radius: 50%;
  background: #a9a9a9;
  color: #fff;
  font-size: 42px;
  font-weight: 600;
}

.badge svg {
  width: 80px;
  height: 80px;
}

.current .badge {
  background: #4c84c4;
}

.stop-text {
  display: flex;
  flex-direction: column;
  font-size: 42px;
  line-height: 53px;
}

.stop-text strong,
.current .stop-text {
  font-size: 44px;
  font-weight: 700;
}

.action {
  position: relative;
  padding: 4px 50px 49px;
  background: #d7d7d7;
  box-shadow: inset 0 0 32px rgba(0, 0, 0, 0.1);
}

.faint {
  position: absolute;
  inset: 0;
  width: 100%;
  height: 100%;
}

.attribution {
  position: absolute;
  bottom: 25px;
  left: 20px;
  color: #f2f2f2;
  font-size: 54px;
  font-weight: 500;
  line-height: 66px;
}

.fab {
  position: absolute;
  right: 34px;
  bottom: 32px;
  width: 186px;
  height: 186px;
  border-radius: 50%;
  background: #f3f3f3;
}

.arrived {
  position: relative;
  display: block;
  width: 100%;
  height: 198px;
  padding: 0 0 2px;
  border-radius: 32px;
  background: #4c84c4;
  color: #fff;
  font-size: 53px;
  font-weight: 700;
}

.tabs {
  position: relative;
  display: flex;
  flex-direction: column;
  align-items: center;
  justify-content: space-between;
  box-sizing: border-box;
  height: 275px;
  padding-bottom: 26px;
  background: #222;
}

.tab-row {
  display: flex;
  width: 100%;
}

.tab-row button {
  display: flex;
  flex: 1;
  justify-content: center;
  padding: 30px 0;
  color: #dcdcdc;
}

.tab-row svg {
  width: 94px;
  height: 94px;
  fill: currentColor;
}

.tab-row .active {
  color: #e9a449;
}

.home {
  width: 444px;
  height: 16px;
  border-radius: 8px;
  background: #fff;
}
</style>
